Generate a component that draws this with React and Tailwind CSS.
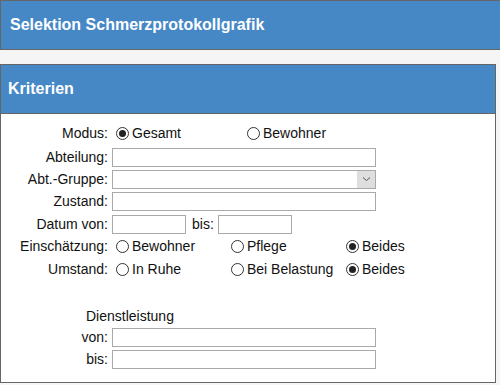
import React from "react";

function Radio({ checked, label, className = "" }) {
  return (
    <span className={"flex items-center " + className}>
      <span className="flex h-[13px] w-[13px] items-center justify-center rounded-full border border-[#333] bg-white">
        {checked && <span className="h-[7px] w-[7px] rounded-full bg-[#222]" />}
      </span>
      <span className="ml-[3px]">{label}</span>
    </span>
  );
}

function Label({ children }) {
  return <span className="w-[107px] shrink-0 text-right">{children}</span>;
}

function Input({ w = "w-[264px]" }) {
  return <span className={"ml-[4px] block h-[19px] border border-[#a9a9a9] bg-white " + w} />;
}

export default function App() {
  return (
    <div
      className="h-[385px] w-[500px] overflow-hidden bg-[#f5f5f5] text-[14px] text-[#111]"
      style={{ fontFamily: '"Liberation Sans", Arial, sans-serif' }}
    >
      <div className="flex h-[50px] w-[500px] items-center border-b border-l border-t border-[#666] bg-[#4688c6] pl-[9px] text-[16px] font-bold text-white">
        Selektion Schmerzprotokollgrafik
      </div>
      <div className="mt-[14px] w-[496px] border border-[#666] bg-white">
        <div className="flex h-[49px] items-center border-b border-[#666] bg-[#4688c6] pl-[7px] text-[16px] font-bold text-white">
          Kriterien
        </div>
        <div className="flex flex-col pb-[12px] pt-[8px]">
          <div className="flex h-[22px] items-center">
            <Label>Modus:</Label>
            <Radio checked label="Gesamt" className="ml-[8px] w-[131px]" />
            <Radio label="Bewohner" />
          </div>
          <div className="mt-[2px] flex h-[22px] items-center">
            <Label>Abteilung:</Label>
            <Input />
          </div>
          <div className="flex h-[22px] items-center">
            <Label>Abt.-Gruppe:</Label>
            <span className="ml-[4px] flex h-[19px] w-[264px] items-stretch justify-end border border-[#a9a9a9] bg-white">
              <span className="flex w-[18px] items-center justify-center bg-[#dedede]">
                <svg width="9" height="6" viewBox="0 0 9 6" fill="none">
                  <path d="M1 1.5 L4.5 4.5 L8 1.5" stroke="#555" strokeWidth="1" />
                </svg>
              </span>
            </span>
          </div>
          <div className="flex h-[22px] items-center">
            <Label>Zustand:</Label>
            <Input />
          </div>
          <div className="mt-[1px] flex h-[22px] items-center">
            <Label>Datum von:</Label>
            <Input w="w-[74px]" />
            <span className="ml-[6px]">bis:</span>
            <Input w="w-[74px]" />
          </div>
          <div className="flex h-[22px] items-center">
            <Label>Einschätzung:</Label>
            <Radio label="Bewohner" className="ml-[8px] w-[115px]" />
            <Radio label="Pflege" className="w-[115px]" />
            <Radio checked label="Beides" />
          </div>
          <div className="mt-[1px] flex h-[22px] items-center">
            <Label>Umstand:</Label>
            <Radio label="In Ruhe" className="ml-[8px] w-[115px]" />
            <Radio label="Bei Belastung" className="w-[115px]" />
            <Radio checked label="Beides" />
          </div>
          <div className="mt-[26px] flex h-[20px] items-center pl-[85px]">Dienstleistung</div>
          <div className="flex h-[22px] items-center">
            <Label>von:</Label>
            <Input />
          </div>
          <div className="flex h-[22px] items-center">
            <Label>bis:</Label>
            <Input />
          </div>
        </div>
      </div>
    </div>
  );
}
